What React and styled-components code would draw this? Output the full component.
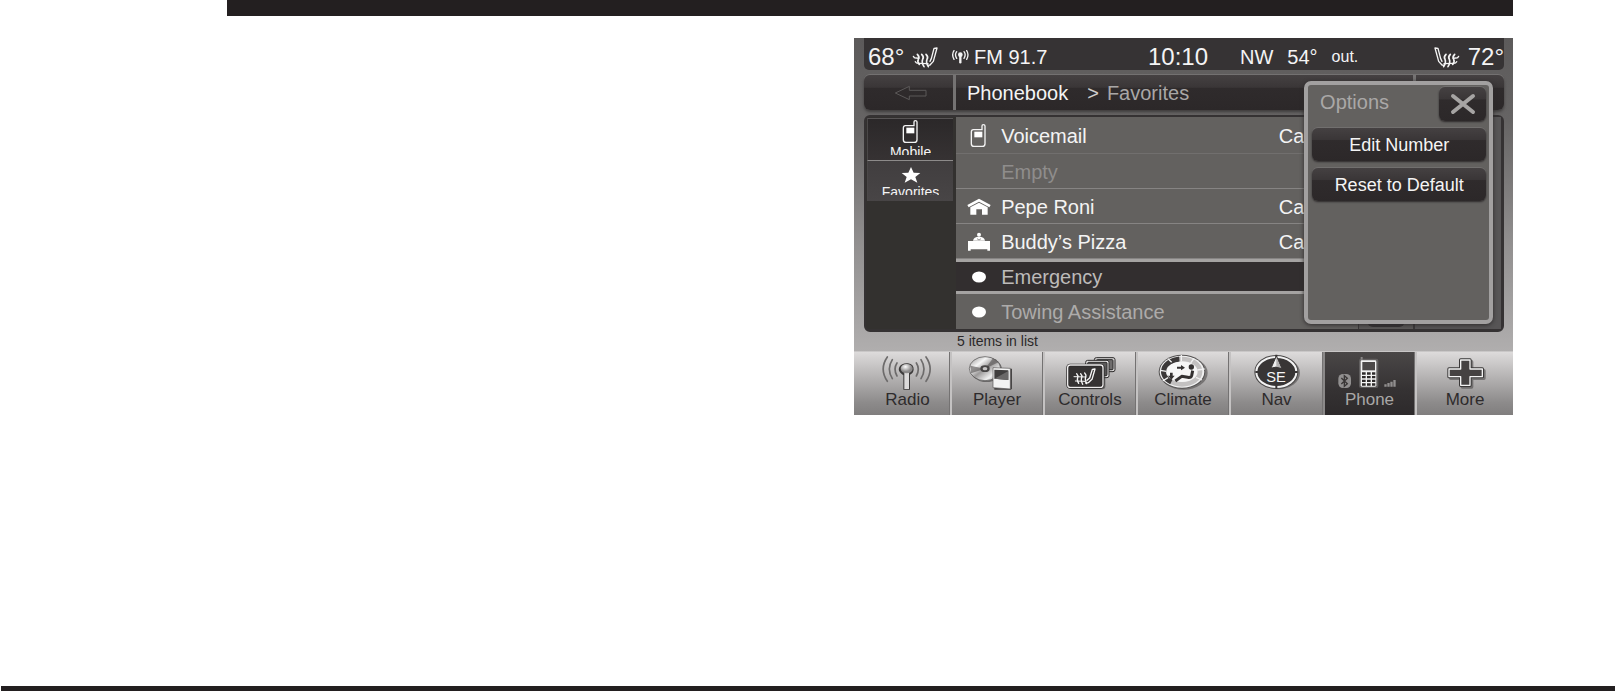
import React, { useState } from 'react';
import styled, { createGlobalStyle, css } from 'styled-components';

const GlobalStyle = createGlobalStyle`
  * {
    box-sizing: border-box;
  }

  body {
    margin: 0;
    background: #ffffff;
    font-family: "Liberation Sans", Arial, sans-serif;
  }

  button {
    font-family: inherit;
    border: 0;
    padding: 0;
    cursor: pointer;
  }
`;

function SeatIcon({ flip }) {
  return (
    <svg width="26" height="22" viewBox="0 0 78 66" fill="none" stroke="#f4f4f4" strokeWidth="4" strokeLinejoin="round" strokeLinecap="round">
      <g transform={flip ? 'translate(78 0) scale(-1 1)' : undefined}>
        <path d="M54 46 L58 38 L66 7 L75 6 L64 46 L54 57 L48 58" />
        <path d="M16 25 q8 8 3 15 q-4 7 3 15 M29 25 q8 8 3 15 q-4 9 4 22 M42 25 q8 8 3 15 q-4 9 4 22" strokeWidth="5" />
        <path d="M4 31 q2 6 10 5 L20 37 M10 47 q2 5 10 5 L48 53" />
      </g>
    </svg>
  );
}

function AntennaIcon() {
  return (
    <svg width="17" height="14" viewBox="0 0 51 42" fill="none" stroke="#f4f4f4" strokeWidth="4" strokeLinecap="round">
      <circle cx="25" cy="14" r="7" fill="#f4f4f4" stroke="none" />
      <path d="M25 16 V37" strokeWidth="7" />
      <path d="M14 5 Q7 14 14 25 M36 5 Q43 14 36 25 M6 2 Q-2 14 6 28 M44 2 Q52 14 44 28" />
    </svg>
  );
}

function MobileIcon() {
  return (
    <svg width="18" height="24" viewBox="0 0 54 72">
      <path d="M10 17 H36 V6 q0 -4 4 -4 q5 0 5 4 V59 q0 8 -8 8 H12 q-8 0 -8 -8 V24 q0 -7 6 -7 Z" fill="none" stroke="#f4f4f4" strokeWidth="4" />
      <rect x="13" y="23" width="24" height="17" fill="#ffffff" />
    </svg>
  );
}

function StarIcon() {
  return (
    <svg width="20" height="18" viewBox="0 0 60 54">
      <path d="M30 3 L38 20 L58 21 L43 33 L49 50 L30 40 L11 50 L17 33 L2 21 L22 20 Z" fill="#ffffff" />
    </svg>
  );
}

function HomeIcon() {
  return (
    <svg width="24" height="18" viewBox="0 0 72 54">
      <path d="M1 21 L36 2 L71 21 L67 28 L36 11 L5 28 Z" fill="#ffffff" />
      <path d="M10 28 L36 14 L62 28 V50 H45 V34 H28 V50 H10 Z" fill="#ffffff" />
    </svg>
  );
}

function WorkIcon() {
  return (
    <svg width="24" height="20" viewBox="0 0 72 60">
      <circle cx="36" cy="8" r="6" fill="#ffffff" />
      <path d="M18 26 Q20 14 36 14 Q52 14 54 26 Z" fill="#ffffff" />
      <path d="M30 20 L36 24 L42 20" fill="none" stroke="#63615f" strokeWidth="2" />
      <path d="M3 27 H69 V56 H61 V52 H11 V56 H3 Z" fill="#ffffff" />
    </svg>
  );
}

function DotIcon() {
  return (
    <svg width="14" height="12" viewBox="0 0 14 12">
      <ellipse cx="7" cy="6" rx="7" ry="5.5" fill="#ffffff" />
    </svg>
  );
}

function BackIcon() {
  return (
    <svg width="34" height="16" viewBox="0 0 102 48">
      <path d="M4 24 L46 4 V16 H96 V33 H46 V44 Z" fill="none" stroke="#5b5858" strokeWidth="3" />
    </svg>
  );
}

function CloseIcon() {
  return (
    <svg width="26" height="22" viewBox="0 0 26 22">
      <path d="M3 3 L23 19 M23 3 L3 19" stroke="#a6a4a3" strokeWidth="4" strokeLinecap="round" />
    </svg>
  );
}

function RadioIcon() {
  return (
    <svg width="64" height="36" viewBox="77 27 192 108">
      <defs>
        <radialGradient id="ball" cx="0.4" cy="0.3">
          <stop offset="0" stopColor="#ffffff" />
          <stop offset="1" stopColor="#8c8a8a" />
        </radialGradient>
      </defs>
      <g fill="none" stroke="#6d6b6b" strokeWidth="5" strokeLinecap="round">
        <path d="M140 54 Q128 72 140 93 M126 44 Q108 72 126 101 M111 36 Q86 72 111 109" />
        <path d="M198 54 Q210 72 198 93 M212 44 Q230 72 212 101 M227 36 Q252 72 227 109" />
      </g>
      <path d="M155 88 q-14 -10 -8 -22 q8 -13 26 -11 q18 3 17 19 q-1 10 -11 15 V134 h-20 V91 Z" fill="#3d3b3b" />
      <path d="M162 82 H176 V132 H162 Z" fill="#dcdada" />
      <ellipse cx="169" cy="71" rx="18" ry="14" fill="url(#ball)" />
    </svg>
  );
}

function PlayerIcon() {
  return (
    <svg width="64" height="36" viewBox="350 27 192 108">
      <defs>
        <linearGradient id="disc" x1="0" y1="0" x2="1" y2="1">
          <stop offset="0" stopColor="#8a8888" />
          <stop offset="0.3" stopColor="#f5f5f5" />
          <stop offset="0.5" stopColor="#9b9999" />
          <stop offset="0.75" stopColor="#f0f0f0" />
          <stop offset="1" stopColor="#7b7979" />
        </linearGradient>
      </defs>
      <ellipse cx="414" cy="74" rx="47" ry="37" fill="#6b6969" />
      <ellipse cx="410" cy="71" rx="47" ry="36" fill="url(#disc)" stroke="#4a4848" strokeWidth="2" />
      <path d="M410 71 L366 62 L368 85 Z M410 71 L452 51 L434 40 Z" fill="#5d5b5b" opacity="0.65" />
      <ellipse cx="410" cy="71" rx="14" ry="10" fill="#474545" />
      <ellipse cx="410" cy="71" rx="7" ry="5" fill="#c6c4c4" />
      <path d="M436 72 L491 71 V130 L488 134 H438 Z" fill="#474545" />
      <path d="M434 68 L486 70 V132 L434 128 Z" fill="#f3f3f3" stroke="#575555" strokeWidth="2" />
      <path d="M438 74 L480 76 V105 L438 101 Z" fill="#403e3e" />
      <path d="M438 101 L480 78 V105 Z" fill="#6a6868" />
    </svg>
  );
}

function ControlsIcon() {
  return (
    <svg width="64" height="36" viewBox="629 27 192 108">
      <g stroke="#2d2b2b" strokeWidth="3">
        <rect x="738" y="38" width="62" height="42" rx="6" fill="#d4d2d2" />
        <rect x="744" y="44" width="50" height="30" rx="3" fill="#6f6d6d" />
        <rect x="712" y="46" width="70" height="52" rx="6" fill="#e3e1e1" />
        <rect x="718" y="52" width="58" height="40" rx="3" fill="#5c5a5a" />
      </g>
      <rect x="661" y="61" width="110" height="72" rx="9" fill="#3f3d3d" opacity="0.6" />
      <rect x="658" y="60" width="106" height="67" rx="8" fill="#353232" stroke="#262424" strokeWidth="8" />
      <rect x="658" y="60" width="106" height="67" rx="8" fill="none" stroke="#eeecec" strokeWidth="4" />
      <g fill="none" stroke="#f7f7f7" strokeWidth="4" strokeLinecap="round" strokeLinejoin="round">
        <path d="M716 106 L724 99 L732 73 L740 72 L731 103 L720 113 L712 114" />
        <path d="M685 86 q6 6 3 12 q-3 7 3 17 M697 86 q6 6 3 12 q-3 7 3 20 M709 84 q6 6 3 12 q-3 7 3 20" />
        <path d="M677 95 L713 96 M681 108 L710 109" strokeWidth="3" />
      </g>
    </svg>
  );
}

function ClimateIcon() {
  return (
    <svg width="64" height="36" viewBox="67 27 192 108">
      <ellipse cx="165" cy="84" rx="72" ry="50" fill="#5f5d5d" opacity="0.7" />
      <ellipse cx="160" cy="80" rx="70" ry="51" fill="#555353" />
      <ellipse cx="160" cy="80" rx="67" ry="48" fill="#f1f1f1" />
      <ellipse cx="160" cy="80" rx="54" ry="38" fill="none" stroke="#c3c1c1" strokeWidth="14" />
      <path d="M152 42 A54 38 0 0 0 128 111" fill="none" stroke="#3b3838" strokeWidth="15" />
      <path d="M118 41 L129 52 M95 76 L113 79 M102 108 L118 98 M196 40 L186 54 M228 72 L206 75 M220 105 L202 97 M158 30 V48" stroke="#f1f1f1" strokeWidth="4" />
      <ellipse cx="160" cy="80" rx="45" ry="30" fill="#f6f6f6" />
      <circle cx="188" cy="66" r="8" fill="#343131" />
      <path d="M192 77 L189 92 Q187 99 177 97 L159 94 L140 108" fill="none" stroke="#343131" strokeWidth="9" strokeLinejoin="round" />
      <path d="M145 65 h12 v-5 l12 8 l-12 8 v-5 h-12 Z" fill="#343131" />
      <path d="M124 83 h8 v9 h6 l-10 12 l-10 -12 h6 Z" fill="#343131" />
    </svg>
  );
}

function CompassIcon() {
  return (
    <svg width="64" height="36" viewBox="345 27 192 108">
      <ellipse cx="444" cy="84" rx="66" ry="49" fill="#5b5959" opacity="0.7" />
      <ellipse cx="439" cy="81" rx="62" ry="47" fill="#383535" stroke="#4a4848" strokeWidth="8" />
      <ellipse cx="439" cy="81" rx="60" ry="45" fill="none" stroke="#f2f2f2" strokeWidth="6" />
      <path d="M376 81 H388 M490 81 H503 M439 120 V131 M439 29 V44" stroke="#383535" strokeWidth="6" />
      <path d="M439 33 L423 70 Q439 62 455 70 Z" fill="#efefef" stroke="#383535" strokeWidth="3" />
      <path d="M439 36 V65 L453 68 Z" fill="#b3b1b1" />
      <text x="438" y="110" textAnchor="middle" fill="#f6f6f6" fontSize="44" fontFamily="'Liberation Sans', Arial, sans-serif">SE</text>
    </svg>
  );
}

function PhoneIcon() {
  return (
    <svg width="64" height="36" viewBox="84 27 192 108">
      <rect x="85" y="87" width="38" height="42" rx="14" fill="#918f8f" />
      <path d="M94 99 L112 116 L103 124 V92 L112 100 L94 117" fill="none" stroke="#393636" strokeWidth="4" />
      <path d="M155 36 V50" stroke="#8a8888" strokeWidth="6" />
      <rect x="147" y="41" width="58" height="88" rx="6" fill="#777474" opacity="0.6" />
      <rect x="152" y="46" width="47" height="79" rx="4" fill="#f3f3f3" />
      <rect x="157" y="51" width="38" height="25" fill="#4c4949" />
      <g fill="#2d2a2a">
        {[82, 93, 104, 115].map((y) => (
          <path key={y} d={`M156 ${y} h11 v7 h-11 Z M171 ${y} h11 v7 h-11 Z M186 ${y} h10 v7 h-10 Z`} />
        ))}
      </g>
      <path d="M223 118 h7 v7 h-7 Z M232 114 h7 v11 h-7 Z M241 110 h7 v15 h-7 Z M250 105 h7 v20 h-7 Z" fill="#918f8f" />
    </svg>
  );
}

function MoreIcon() {
  const plus = 'M447 45 H475 V72 H512 V95 H475 V121 H447 V95 H412 V72 H447 Z';
  return (
    <svg width="64" height="36" viewBox="364 27 192 108">
      <path d={plus} transform="translate(5 5)" fill="#5b5959" stroke="#5b5959" strokeWidth="10" strokeLinejoin="round" opacity="0.7" />
      <path d={plus} fill="#3a3838" stroke="#3a3838" strokeWidth="10" strokeLinejoin="round" />
      <path d={plus} fill="#454242" stroke="#f2f2f2" strokeWidth="4" strokeLinejoin="round" />
    </svg>
  );
}

const contacts = [
  { name: 'Voicemail', icon: <MobileIcon />, action: 'Ca' },
  { name: 'Empty', tone: '#8f8d8c' },
  { name: 'Pepe Roni', icon: <HomeIcon />, action: 'Ca' },
  { name: 'Buddy’s Pizza', icon: <WorkIcon />, action: 'Ca' },
  { name: 'Emergency', icon: <DotIcon />, tone: '#bdbbba', selected: true },
  { name: 'Towing Assistance', icon: <DotIcon />, tone: '#adabaa' },
];

const apps = [
  { name: 'Radio', icon: <RadioIcon /> },
  { name: 'Player', icon: <PlayerIcon /> },
  { name: 'Controls', icon: <ControlsIcon /> },
  { name: 'Climate', icon: <ClimateIcon /> },
  { name: 'Nav', icon: <CompassIcon /> },
  { name: 'Phone', icon: <PhoneIcon /> },
  { name: 'More', icon: <MoreIcon /> },
];

function App() {
  const [open, setOpen] = useState(true);
  const [current, setCurrent] = useState('Phone');

  return (
    <Page>
      <GlobalStyle />
      <TopBand />
      <Main>
        <Device>
          <StatusBar>
            <StatusGroup $gap={8}>
              <Reading>68°</Reading>
              <SeatIcon />
            </StatusGroup>
            <StatusGroup $gap={5}>
              <AntennaIcon />
              <Info>FM 91.7</Info>
            </StatusGroup>
            <Reading>10:10</Reading>
            <StatusGroup $gap={14}>
              <Info>NW</Info>
              <Info>54°</Info>
              <Small>out.</Small>
            </StatusGroup>
            <StatusGroup $gap={8} $end>
              <SeatIcon flip />
              <Reading>72°</Reading>
            </StatusGroup>
          </StatusBar>

          <TitleBar>
            <BackButton aria-label="Back">
              <BackIcon />
            </BackButton>
            <Crumbs>
              <span>Phonebook</span>
              <Separator>&gt;</Separator>
              <Current>Favorites</Current>
            </Crumbs>
            <TitleEnd />
          </TitleBar>

          <Panel>
            <Sidebar>
              <SideTab>
                <MobileIcon />
                <SideLabel>Mobile</SideLabel>
              </SideTab>
              <SideTab $active>
                <StarIcon />
                <SideLabel>Favorites</SideLabel>
              </SideTab>
            </Sidebar>
            <List>
              {contacts.map((item) => (
                <Row key={item.name} $selected={item.selected} $tone={item.tone}>
                  <RowIcon>{item.icon}</RowIcon>
                  <RowName>{item.name}</RowName>
                  {item.action && <span>{item.action}</span>}
                </Row>
              ))}
            </List>
            <ScrollColumn>
              <ScrollButton aria-label="Scroll down" />
            </ScrollColumn>
            <EndColumn />
          </Panel>

          <Count>5 items in list</Count>

          <AppBar>
            {apps.map((app) => (
              <AppTab key={app.name} $active={app.name === current} onClick={() => setCurrent(app.name)}>
                {app.icon}
                <AppLabel>{app.name}</AppLabel>
              </AppTab>
            ))}
          </AppBar>

          {open && (
            <Options>
              <OptionsHead>
                <OptionsTitle>Options</OptionsTitle>
                <CloseButton aria-label="Close" onClick={() => setOpen(false)}>
                  <CloseIcon />
                </CloseButton>
              </OptionsHead>
              <OptionButton>Edit Number</OptionButton>
              <OptionButton>Reset to Default</OptionButton>
            </Options>
          )}
        </Device>
      </Main>
      <BottomBand />
    </Page>
  );
}

export default App;

const darkGlass = css`
  background: linear-gradient(#454142 0%, #3a3637 35%, #2f2b2c 38%, #2c2829 100%);
`;

const Page = styled.div`
  display: flex;
  flex-direction: column;
  min-height: 100vh;
`;

const TopBand = styled.header`
  height: 16px;
  margin: 0 102px 0 227px;
  background: #231f20;
`;

const Main = styled.main`
  flex: 1;
  display: grid;
  grid-template-columns: 627fr 659fr;
  align-items: start;
  margin: 22px 102px 0 227px;
`;

const BottomBand = styled.footer`
  height: 5px;
  margin-left: 1px;
  background: #231f20;
`;

const Device = styled.section`
  position: relative;
  grid-column: 2;
  background: linear-gradient(#5c5a5a 0%, #666464 22%, #929090 55%, #b2b0b0 85%);
`;

const StatusBar = styled.div`
  display: grid;
  grid-template-columns: 84fr 196fr 92fr 152fr 112fr;
  align-items: center;
  height: 32px;
  margin: 0 9px 0 10px;
  padding: 5px 0 0 4px;
  border-radius: 0 0 5px 5px;
  background: #363334;
  color: #f4f4f4;
`;

const StatusGroup = styled.div`
  display: flex;
  align-items: center;
  gap: ${({ $gap }) => $gap}px;
  justify-content: ${({ $end }) => ($end ? 'flex-end' : 'flex-start')};
`;

const Reading = styled.span`
  font-size: 24px;
  line-height: 24px;
`;

const Info = styled.span`
  font-size: 20px;
  line-height: 24px;
`;

const Small = styled.span`
  font-size: 16px;
  line-height: 24px;
`;

const TitleBar = styled.div`
  display: grid;
  grid-template-columns: 92fr 457fr 91fr;
  height: 35px;
  margin: 5px 9px 0 10px;
  border-radius: 6px;
  ${darkGlass}
  box-shadow: 0 2px 3px #3f3d3d, 0 -1px 0 #767474;
`;

const BackButton = styled.button`
  display: flex;
  align-items: center;
  justify-content: center;
  padding-left: 4px;
  background: none;
  border-right: 3px solid #757373;
`;

const Crumbs = styled.div`
  display: flex;
  align-items: center;
  padding-left: 11px;
  color: #f4f4f4;
  font-size: 20px;
  line-height: 24px;
`;

const Separator = styled.span`
  margin: 0 8px 0 19px;
  color: #cfcdcc;
`;

const Current = styled.span`
  color: #a9a7a6;
`;

const TitleEnd = styled.div`
  border-left: 3px solid #757373;
`;

const Panel = styled.div`
  display: grid;
  grid-template-columns: 90fr 401fr 57fr 86fr;
  margin: 5px 9px 0 10px;
  border: 3px solid #353233;
  border-top-width: 2px;
  border-left-width: 2px;
  border-radius: 6px;
  background: #33312f;
`;

const Sidebar = styled.div`
  display: flex;
  flex-direction: column;
  padding: 1px 3px 0 1px;
`;

const SideTab = styled.button`
  display: flex;
  flex-direction: column;
  align-items: center;
  justify-content: flex-end;
  height: ${({ $active }) => ($active ? '41px' : '42px')};
  padding-bottom: ${({ $active }) => ($active ? '6px' : '5px')};
  border-top: 1px solid ${({ $active }) => ($active ? '#8d8b8a' : '#585556')};
  border-left: 1px solid #4b4849;
  background: ${({ $active }) => ($active ? 'linear-gradient(#413e3f, #484546)' : 'linear-gradient(#2b2829, #363233)')};
  color: #f4f4f4;
`;

const SideLabel = styled.span`
  height: 11px;
  overflow: hidden;
  font-size: 14px;
  line-height: 16px;
`;

const List = styled.ul`
  margin: 0;
  padding: 0;
  list-style: none;
  background: #63615f;
`;

const Row = styled.li`
  display: grid;
  grid-template-columns: 45px 1fr 79px;
  align-items: center;
  height: 35px;
  padding-top: 1px;
  border-bottom: 1px solid #868483;
  color: ${({ $tone }) => $tone || '#f4f4f4'};
  font-size: 20px;
  line-height: 24px;

  &:first-child {
    height: 37px;
    border-bottom-color: #716f6e;
  }

  &:last-child {
    border-bottom: 0;
  }

  ${({ $selected }) =>
    $selected &&
    css`
      border-top: 3px solid #a5a3a2;
      border-bottom: 3px solid #a5a3a2;
      background: #322e2f;
    `}
`;

const RowIcon = styled.span`
  display: flex;
  justify-content: center;
`;

const RowName = styled.span`
  white-space: nowrap;
`;

const ScrollColumn = styled.div`
  display: flex;
  flex-direction: column;
  justify-content: flex-end;
  padding: 0 8px 2px;
  border-left: 1px solid #3a3738;
  border-right: 2px solid #3a3738;
  background: #5b5958;
`;

const ScrollButton = styled.button`
  height: 32px;
  border-radius: 6px;
  background: #353233;
`;

const EndColumn = styled.div`
  background: #575556;
`;

const Count = styled.p`
  margin: 0;
  padding: 0 0 1px 103px;
  color: #2b2829;
  font-size: 14px;
  line-height: 18px;
`;

const AppBar = styled.nav`
  display: grid;
  grid-template-columns: 96fr 93fr 93fr 93fr 94fr 92fr 98fr;
  border-top: 1px solid #c9c7c7;
`;

const AppTab = styled.button`
  display: flex;
  flex-direction: column;
  align-items: center;
  height: 63px;
  padding: 2px 0 0;
  border-left: 2px solid #c4c2c2;
  border-right: 1px solid #747272;
  background: linear-gradient(#dddbdb 0%, #bab8b8 35%, #8d8b8b 80%, #807e7e 100%);
  color: #2e2b2c;

  &:first-child {
    padding-left: 12px;
    border-left: 0;
  }

  &:last-child {
    border-right: 0;
  }

  ${({ $active }) =>
    $active &&
    css`
      border-left-color: #8b8989;
      background: linear-gradient(#4a4747, #353233 60%, #2d2a2b);
      color: #a9a7a6;
    `}
`;

const AppLabel = styled.span`
  font-size: 17px;
  line-height: 20px;
`;

/* pop-up over the list */
const Options = styled.div`
  position: absolute;
  top: 43px;
  right: 3%;
  bottom: 91px;
  width: 28.7%;
  padding: 2px 3px 2px 4px;
  border: 4px solid #a2a0a0;
  border-radius: 7px;
  background: #63615f;
  box-shadow: 0 1px 4px #2d2a2b;
`;

const OptionsHead = styled.div`
  display: flex;
  align-items: flex-start;
  justify-content: space-between;
  margin-bottom: 7px;
  padding-left: 8px;
`;

const OptionsTitle = styled.span`
  padding-top: 3px;
  color: #aaa8a7;
  font-size: 20px;
  line-height: 24px;
`;

const CloseButton = styled.button`
  display: flex;
  align-items: center;
  justify-content: center;
  width: 47px;
  height: 34px;
  border-radius: 6px;
  ${darkGlass}
  box-shadow: 0 1px 2px #2d2a2b, 0 -1px 0 #757372;
`;

const OptionButton = styled.button`
  display: block;
  width: 100%;
  height: 33px;
  margin-bottom: 7px;
  border-radius: 6px;
  ${darkGlass}
  box-shadow: 0 1px 2px #2d2a2b, 0 -1px 0 #757372;
  color: #f4f4f4;
  font-size: 18px;
  line-height: 20px;
`;
